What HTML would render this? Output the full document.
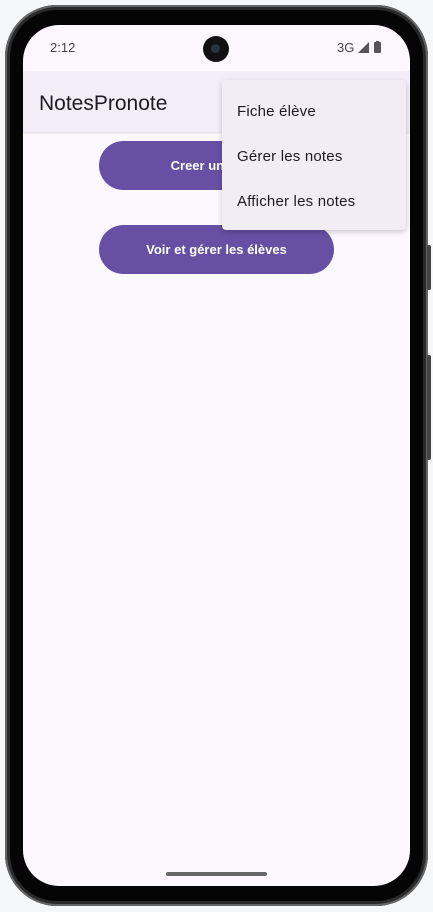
<!DOCTYPE html>
<html><head><style>
body{margin:0;width:433px;height:912px;background:#f6f7f9;position:relative;overflow:hidden;font-family:"Liberation Sans",sans-serif}
.frame{position:absolute;left:5px;top:5px;width:423px;height:901px;border-radius:52px;background:#050505;box-shadow:inset 0 0 0 2px #666,inset 0 0 0 5px #2a2a2a}
.btnside{position:absolute;left:427px;width:4px;background:#444;border-radius:2px}
.screen{position:absolute;left:23px;top:25px;width:387px;height:861px;border-radius:36px;background:#fdf7fe;overflow:hidden}
.cam{position:absolute;left:180px;top:11px;width:26px;height:26px;border-radius:50%;background:#111}
.cam:after{content:"";position:absolute;left:8px;top:8px;width:9px;height:9px;border-radius:50%;background:#2a3340}
.status{position:absolute;top:15px;font-size:13px;color:#444}
.bar{position:absolute;left:0;top:46px;width:387px;height:61px;background:#f3edf7;box-shadow:0 1px 2px rgba(0,0,0,.12)}
.title{position:absolute;left:16px;top:21px;font-size:21px;color:#1d1b20}
.btn{position:absolute;left:76px;width:235px;height:49px;border-radius:25px;background:#674fa3;color:#fff;font-size:13px;font-weight:bold;text-align:center;line-height:49px}
.menu{position:absolute;left:199px;top:55px;width:184px;height:150px;background:#f2ecf5;border-radius:4px;box-shadow:0 2px 6px rgba(0,0,0,.2)}
.mi{position:absolute;left:15px;font-size:15px;color:#1d1b20;letter-spacing:.2px}
.home{position:absolute;left:143px;top:847px;width:101px;height:4px;border-radius:2px;background:#666}
</style></head><body>
<div class="frame"></div>
<div class="btnside" style="top:245px;height:45px"></div>
<div class="btnside" style="top:355px;height:105px"></div>
<div class="screen">
<div class="cam"></div>
<div class="status" style="left:27px">2:12</div>
<div class="status" style="left:314px">3G
<svg width="12" height="11" style="vertical-align:-1px"><path d="M0 11L11 0V11Z" fill="#555"/></svg>
<svg width="7" height="12" style="vertical-align:-1px"><rect x="0" y="1" width="7" height="11" rx="1" fill="#555"/><rect x="2" y="0" width="3" height="2" fill="#555"/></svg></div>
<div class="bar"><div class="title">NotesPronote</div></div>
<div class="btn" style="top:116px">Creer une note</div>
<div class="btn" style="top:200px">Voir et gérer les élèves</div>
<div class="menu">
<div class="mi" style="top:23px">Fiche élève</div>
<div class="mi" style="top:68px">Gérer les notes</div>
<div class="mi" style="top:113px">Afficher les notes</div>
</div>
<div class="home"></div>
</div>
</body></html>
